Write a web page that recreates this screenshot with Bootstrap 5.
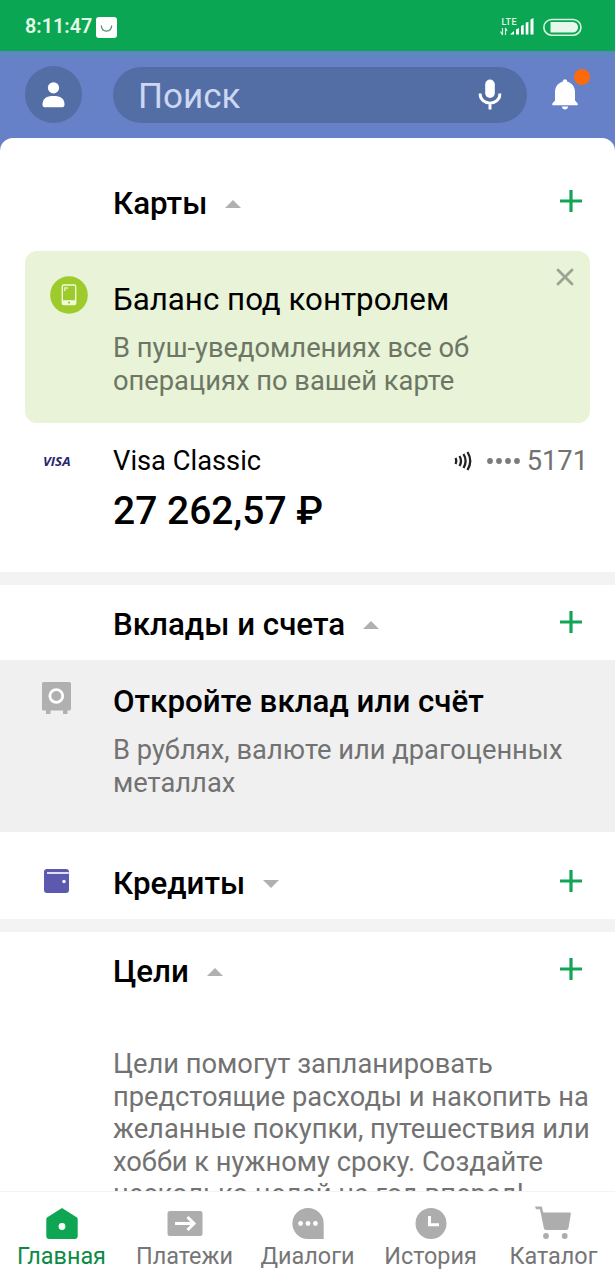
<!DOCTYPE html>
<html lang="ru">
<head>
<meta charset="utf-8">
<meta name="viewport" content="width=device-width, initial-scale=1">
<title>Главная</title>
<link href="https://cdn.jsdelivr.net/npm/bootstrap@5.3.0/dist/css/bootstrap.min.css" rel="stylesheet">
<style>
  body { font-family: Roboto, "Noto Sans", sans-serif; color: #000; height: 1280px; overflow: hidden; }
  svg { display: block; flex: none; }
  .screen { height: 1280px; }
  .status, .topbar, .tabs { flex: none; }
  .status { height: 51px; background: #0aa653; padding: 3px 33px 0 25px; }
  .clock { font-size: 19.8px; font-weight: 600; color: #e4f8e8; line-height: 22px; }
  .topbar { height: 87px; background: linear-gradient(#5d86be 0, #5f86c3 6px, #6681c7 9px); padding: 0 37px 0 25px; }
  .tint { background: #526ea5; }
  .avatar { width: 57px; height: 57px; }
  .search { width: 414px; height: 56px; margin-left: 31px; padding: 0 25px; }
  .search span { font-size: 35px; color: #cdd7f2; line-height: 40px; padding-top: 4px; }
  .sheet-wrap { background: #6681c7; min-height: 0; flex: 1 1 0; }
  .sheet { background: #fff; border-radius: 13px 13px 0 0; height: 100%; overflow: hidden; }
  .sheet > * { flex: none; }
  .sec { position: relative; padding: 0 32px 0 113px; }
  .sec h2, .t-title { font-size: 31.3px; font-weight: 500; line-height: 40px; margin: 0; white-space: nowrap; }
  .caret { margin-left: 18px; }
  .plus { margin-left: auto; margin-top: -6px; }
  .lead-icon { position: absolute; }
  .promo { height: 172px; margin: 0 25px; border-radius: 12px; background: #e8f3d7; padding: 29px 0 0 88px; position: relative; }
  .t-body { font-size: 27.3px; line-height: 32.5px; color: #727272; margin: 0; white-space: nowrap; }
  .promo .t-body { color: #6d7664; }
  .money { font-size: 39px; font-weight: 500; line-height: 48px; white-space: nowrap; }
  .band { height: 13px; background: #f3f3f3; }
  .offer { height: 172px; background: #f0f0f0; padding: 22px 0 0 113px; position: relative; }
  .tabs { height: 89px; background: #fff; border-top: 1px solid #f3f3f3; }
  .tab { width: 123px; color: #767676; font-size: 23.4px; line-height: 28px; padding-top: 12px; white-space: nowrap; }
  .tab.on { color: #0b8a45; }
  .tab svg { margin: 4px 0 3px; }
</style>
</head>
<body>
<div class="screen d-flex flex-column">

  <div class="status d-flex align-items-center">
    <span class="clock">8:11:47</span>
    <svg class="ms-1" width="21" height="21" viewBox="0 0 21 21"><rect width="21" height="21" rx="3" fill="#fff"/><path d="M5.3 8.500c.6 7.500 9.800 7.500 10.400 0" fill="none" stroke="#4d8f6c" stroke-width="1.300"/></svg>
    <svg class="ms-auto" width="34" height="20" viewBox="0 0 34 20">
      <text x="1.500" y="7.500" font-family="Roboto" font-size="9" font-weight="500" fill="#e4f8e8" textLength="15">LTE</text>
      <path d="M2.500 11v7M.5 14.500l2 3.500M5.500 18v-7l1.500 3" stroke="#d0f0dc" stroke-width="1.200" fill="none"/>
      <path d="M10 17.500 14 14v3.500zM16 12.500l3-1.500v6.500h-3zM21 9l2.700-1.200v9.700H21zM25.700 5.800l2.700-1v12.700h-2.700zM30.500 2.500l3-1.500v16.500h-3z" fill="#fff"/>
    </svg>
    <svg style="margin-left:8px" width="40" height="19" viewBox="0 0 40 19"><rect x="1.900" y="1.500" width="37" height="15.700" rx="7.800" fill="none" stroke="#d9f5df" stroke-width="1.600"/><path d="M8.500 4h22.300a5.200 5.200 0 0 1 0 10.600H8.500z" fill="#e6f8ea"/></svg>
  </div>

  <header class="topbar d-flex align-items-center">
    <div class="avatar tint rounded-circle d-flex align-items-center justify-content-center">
      <svg width="23" height="26" viewBox="0 0 23 26"><circle cx="11.500" cy="5.800" r="5.600" fill="#fff"/><path d="M.5 22.500c0-6 4-8.500 11-8.500s11 2.500 11 8.500c0 2-.8 2.700-2 2.700h-18c-1.200 0-2-.7-2-2.700z" fill="#fff"/></svg>
    </div>
    <div class="search tint rounded-pill d-flex align-items-center justify-content-between">
      <span>Поиск</span>
      <svg width="24" height="31" viewBox="0 0 24 31"><rect x="7.200" y=".5" width="9.600" height="18.500" rx="4.800" fill="#fff"/><path d="M2.200 14.500v1a9.800 8.600 0 0 0 19.600 0v-1M12 24v6.500" fill="none" stroke="#fff" stroke-width="2.900"/></svg>
    </div>
    <div class="position-relative ms-auto">
      <svg width="26" height="31" viewBox="0 0 26 31"><path d="M13 .3c1.300 0 2.300 1 2.300 2.400 5 1.300 7.700 5.200 7.700 10.300v8.500l2.700 3v1.800H.3v-1.800l2.700-3V13c0-5.100 2.700-9 7.700-10.300C10.700 1.300 11.700.3 13 .3zM9.800 27.500h6.400c-.4 2-1.600 3-3.200 3s-2.800-1-3.200-3z" fill="#fff"/></svg>
      <svg class="position-absolute" style="left:22px;top:-10px" width="16" height="16"><circle cx="8" cy="8" r="8" fill="#fb6a0c"/></svg>
    </div>
  </header>

  <main class="sheet-wrap">
    <div class="sheet d-flex flex-column">

      <section class="sec" style="height:113px;padding-top:46px">
        <div class="d-flex align-items-center">
          <h2>Карты</h2>
          <svg class="caret" width="16" height="8"><path d="M0 8 8 0l8 8z" fill="#b0b0b0"/></svg>
          <svg class="plus" width="24" height="24"><path d="M12 1v22M1 12h22" stroke="#12a557" stroke-width="3.200"/></svg>
        </div>
      </section>

      <section class="promo">
        <svg class="lead-icon" style="left:25px;top:25px" width="38" height="38" viewBox="0 0 38 38"><circle cx="19" cy="19" r="18.800" fill="#9ccb2b"/><rect x="12.300" y="9" width="13.400" height="19.500" rx="1.500" fill="none" stroke="#f2fadc" stroke-width="1.400"/><path d="M12.300 24.200h13.400v4.600H12.300z" fill="#f2fadc"/><path d="M14.800 15v-3H18" fill="none" stroke="#e2f2b8" stroke-width="1.500"/><circle cx="19" cy="26.600" r="1.100" fill="#9ccb2b"/></svg>
        <svg class="lead-icon" style="left:531px;top:17px" width="18" height="18"><path d="m2 2 14 14M16 2 2 16" stroke="#9ba395" stroke-width="2.800" stroke-linecap="round"/></svg>
        <div class="t-title fw-normal">Баланс под контролем</div>
        <p class="t-body" style="margin-top:12px">В пуш-уведомлениях все об<br>операциях по вашей карте</p>
      </section>

      <section class="sec" style="height:149px;padding:22px 27px 0 113px">
        <svg class="lead-icon" style="left:39px;top:28px" width="36" height="20"><text x="4" y="14.500" font-family="Open Sans" font-size="12.500" font-weight="700" font-style="italic" fill="#27286f" textLength="27.500" lengthAdjust="spacingAndGlyphs">VISA</text></svg>
        <div class="d-flex align-items-center t-body">
          <span class="text-black">Visa Classic</span>
          <svg class="ms-auto" width="18" height="20" viewBox="0 0 18 20"><path d="M1.500 7q1.500 3 0 6M5.500 5q3 5 0 10M9.500 3q4.200 7 0 14M13.500 1q5.500 9 0 18" fill="none" stroke="#222" stroke-width="2.300"/></svg>
          <svg style="margin-left:14px" width="36" height="8"><g fill="#7b7b7b"><circle cx="4" cy="4" r="2.900"/><circle cx="13" cy="4" r="2.900"/><circle cx="22" cy="4" r="2.900"/><circle cx="31" cy="4" r="2.900"/></g></svg>
          <span style="margin-left:5px">5171</span>
        </div>
        <div class="money" style="margin-top:9px">27 262,57 ₽</div>
      </section>

      <div class="band"></div>

      <section class="sec" style="height:75px;padding-top:20px">
        <div class="d-flex align-items-center">
          <h2>Вклады и счета</h2>
          <svg class="caret" width="16" height="8"><path d="M0 8 8 0l8 8z" fill="#b0b0b0"/></svg>
          <svg class="plus" width="24" height="24"><path d="M12 1v22M1 12h22" stroke="#12a557" stroke-width="3.200"/></svg>
        </div>
      </section>

      <section class="offer">
        <svg class="lead-icon" style="left:42px;top:21px" width="29" height="34" viewBox="0 0 29 34"><path d="M1.500 1h26q1.500 0 1.500 1.500V28q0 1.500-1.500 1.500H25.500v3.500h-4.500v-3.500H8.500V33H4v-3.500H1.500Q0 29.500 0 28V2.500Q0 1 1.500 1z" fill="#b0b0b0"/><circle cx="14.300" cy="15" r="6.400" fill="none" stroke="#fff" stroke-width="2.800"/></svg>
        <div class="t-title">Откройте вклад или счёт</div>
        <p class="t-body" style="margin-top:12px">В рублях, валюте или драгоценных<br>металлах</p>
      </section>

      <section class="sec" style="height:87px;padding-top:32px">
        <svg class="lead-icon" style="left:44px;top:37px" width="25" height="24" viewBox="0 0 25 24"><rect width="25" height="24" rx="3" fill="#5b5aae"/><path d="M3 4h21.800" stroke="#dfdff5" stroke-width="2"/><circle cx="20" cy="12.500" r="1.700" fill="#fff"/></svg>
        <div class="d-flex align-items-center">
          <h2>Кредиты</h2>
          <svg class="caret" width="16" height="8"><path d="M0 0 8 8l8-8z" fill="#b0b0b0"/></svg>
          <svg class="plus" width="24" height="24"><path d="M12 1v22M1 12h22" stroke="#12a557" stroke-width="3.200"/></svg>
        </div>
      </section>

      <div class="band"></div>

      <section class="sec" style="padding-top:20px">
        <div class="d-flex align-items-center">
          <h2>Цели</h2>
          <svg class="caret" width="16" height="8"><path d="M0 8 8 0l8 8z" fill="#b0b0b0"/></svg>
          <svg class="plus" width="24" height="24"><path d="M12 1v22M1 12h22" stroke="#12a557" stroke-width="3.200"/></svg>
        </div>
        <p class="t-body" style="margin-top:56px">Цели помогут запланировать<br>предстоящие расходы и накопить на<br>желанные покупки, путешествия или<br>хобби к нужному сроку. Создайте<br>несколько целей на год вперед!</p>
      </section>
    </div>
  </main>

  <nav class="tabs d-flex">
    <div class="tab on d-flex flex-column align-items-center">
      <svg width="32" height="31" viewBox="0 0 32 31"><path d="M16 0 31 9.500q.7.500.7 1.500v17q0 3-3 3H3.300q-3 0-3-3V11q0-1 .7-1.500z" fill="#0ea653"/><circle cx="16" cy="18.500" r="3.400" fill="#fff"/></svg>Главная
    </div>
    <div class="tab d-flex flex-column align-items-center">
      <svg width="36" height="31" viewBox="0 0 36 31"><rect x=".5" y="3" width="35" height="25" rx="2.500" fill="#adadad"/><path d="M8 15.500h19M20.500 9l6.500 6.500-6.500 6.500" fill="none" stroke="#fff" stroke-width="3"/></svg>Платежи
    </div>
    <div class="tab d-flex flex-column align-items-center">
      <svg width="32" height="31" viewBox="0 0 32 31"><path d="M16 0a15.600 15.500 0 0 1 15.700 15.500V31H16a15.600 15.500 0 0 1 0-31z" fill="#adadad"/><g fill="#fff"><circle cx="8.600" cy="15.500" r="2.400"/><circle cx="16" cy="15.500" r="2.400"/><circle cx="23.400" cy="15.500" r="2.400"/></g></svg>Диалоги
    </div>
    <div class="tab d-flex flex-column align-items-center">
      <svg width="32" height="31" viewBox="0 0 32 31"><circle cx="16" cy="15.500" r="15.500" fill="#adadad"/><path d="M14.500 8v8.800H24" fill="none" stroke="#fff" stroke-width="3"/></svg>История
    </div>
    <div class="tab d-flex flex-column align-items-center">
      <svg width="36" height="31" viewBox="0 0 36 31" overflow="visible"><path d="M-1-1.500h6.800l1.500 6H34q1 0 .9 1L32.500 20q-.3 2-2.300 2H10q-1.800 0-2.200-2L4 1.200H0z" fill="#adadad"/><circle cx="10" cy="28" r="2.900" fill="#adadad"/><circle cx="28.700" cy="28" r="2.900" fill="#adadad"/></svg>Каталог
    </div>
  </nav>
</div>
<script src="https://cdn.jsdelivr.net/npm/bootstrap@5.3.0/dist/js/bootstrap.bundle.min.js"></script>
</body>
</html>
